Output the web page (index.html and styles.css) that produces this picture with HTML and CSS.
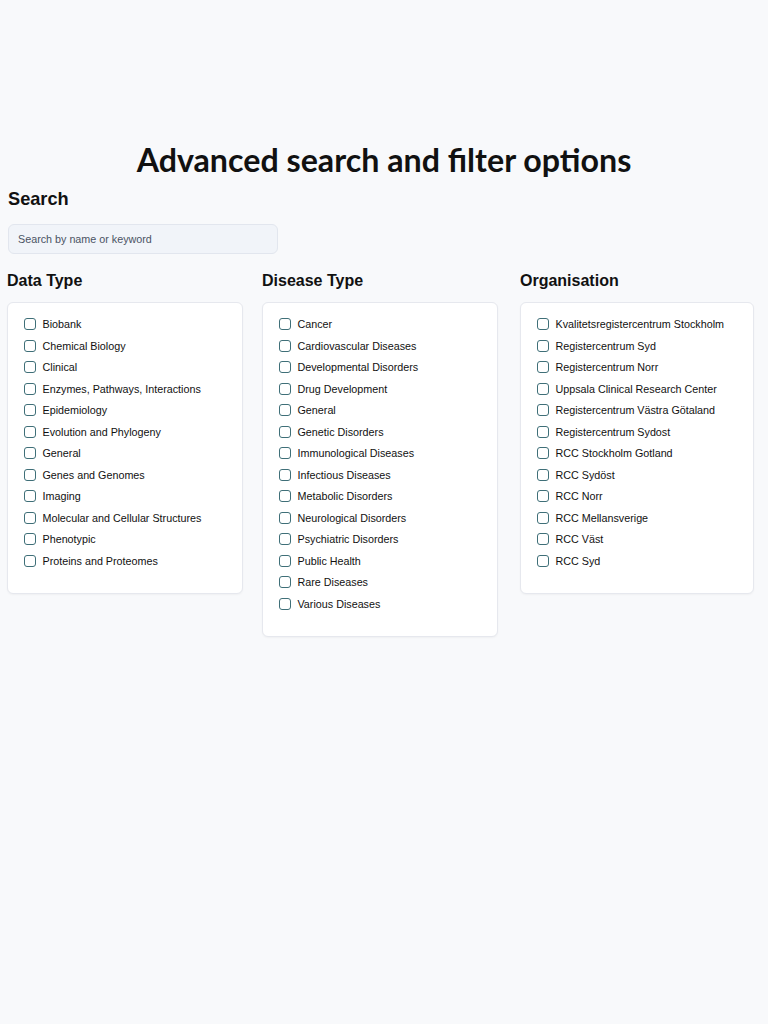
FILE: index.html
```html
<!DOCTYPE html>
<html lang="en">
<head>
<meta charset="utf-8">
<title>Advanced search and filter options</title>
<link rel="stylesheet" href="styles.css">
</head>
<body>
<main class="page">
  <h1 class="title">Advanced search and filter options</h1>
  <section class="search">
    <h2 class="heading search-heading">Search</h2>
    <input class="search-input" type="text" placeholder="Search by name or keyword">
  </section>
  <section class="filters">
    <div class="filter">
      <h2 class="heading">Data Type</h2>
      <ul class="card">
        <li class="item"><input type="checkbox" class="box"><span>Biobank</span></li>
        <li class="item"><input type="checkbox" class="box"><span>Chemical Biology</span></li>
        <li class="item"><input type="checkbox" class="box"><span>Clinical</span></li>
        <li class="item"><input type="checkbox" class="box"><span>Enzymes, Pathways, Interactions</span></li>
        <li class="item"><input type="checkbox" class="box"><span>Epidemiology</span></li>
        <li class="item"><input type="checkbox" class="box"><span>Evolution and Phylogeny</span></li>
        <li class="item"><input type="checkbox" class="box"><span>General</span></li>
        <li class="item"><input type="checkbox" class="box"><span>Genes and Genomes</span></li>
        <li class="item"><input type="checkbox" class="box"><span>Imaging</span></li>
        <li class="item"><input type="checkbox" class="box"><span>Molecular and Cellular Structures</span></li>
        <li class="item"><input type="checkbox" class="box"><span>Phenotypic</span></li>
        <li class="item"><input type="checkbox" class="box"><span>Proteins and Proteomes</span></li>
      </ul>
    </div>
    <div class="filter">
      <h2 class="heading">Disease Type</h2>
      <ul class="card">
        <li class="item"><input type="checkbox" class="box"><span>Cancer</span></li>
        <li class="item"><input type="checkbox" class="box"><span>Cardiovascular Diseases</span></li>
        <li class="item"><input type="checkbox" class="box"><span>Developmental Disorders</span></li>
        <li class="item"><input type="checkbox" class="box"><span>Drug Development</span></li>
        <li class="item"><input type="checkbox" class="box"><span>General</span></li>
        <li class="item"><input type="checkbox" class="box"><span>Genetic Disorders</span></li>
        <li class="item"><input type="checkbox" class="box"><span>Immunological Diseases</span></li>
        <li class="item"><input type="checkbox" class="box"><span>Infectious Diseases</span></li>
        <li class="item"><input type="checkbox" class="box"><span>Metabolic Disorders</span></li>
        <li class="item"><input type="checkbox" class="box"><span>Neurological Disorders</span></li>
        <li class="item"><input type="checkbox" class="box"><span>Psychiatric Disorders</span></li>
        <li class="item"><input type="checkbox" class="box"><span>Public Health</span></li>
        <li class="item"><input type="checkbox" class="box"><span>Rare Diseases</span></li>
        <li class="item"><input type="checkbox" class="box"><span>Various Diseases</span></li>
      </ul>
    </div>
    <div class="filter filter-last">
      <h2 class="heading">Organisation</h2>
      <ul class="card">
        <li class="item"><input type="checkbox" class="box"><span>Kvalitetsregistercentrum Stockholm</span></li>
        <li class="item"><input type="checkbox" class="box"><span>Registercentrum Syd</span></li>
        <li class="item"><input type="checkbox" class="box"><span>Registercentrum Norr</span></li>
        <li class="item"><input type="checkbox" class="box"><span>Uppsala Clinical Research Center</span></li>
        <li class="item"><input type="checkbox" class="box"><span>Registercentrum Västra Götaland</span></li>
        <li class="item"><input type="checkbox" class="box"><span>Registercentrum Sydost</span></li>
        <li class="item"><input type="checkbox" class="box"><span>RCC Stockholm Gotland</span></li>
        <li class="item"><input type="checkbox" class="box"><span>RCC Sydöst</span></li>
        <li class="item"><input type="checkbox" class="box"><span>RCC Norr</span></li>
        <li class="item"><input type="checkbox" class="box"><span>RCC Mellansverige</span></li>
        <li class="item"><input type="checkbox" class="box"><span>RCC Väst</span></li>
        <li class="item"><input type="checkbox" class="box"><span>RCC Syd</span></li>
      </ul>
    </div>
  </section>
</main>
</body>
</html>
```
FILE: styles.css
```css
* { box-sizing: border-box; }
html, body {
  margin: 0;
  padding: 0;
  background: #f8f9fb;
}
body {
  font-family: "Liberation Sans", Arial, sans-serif;
  color: #111;
}
.page {
  padding: 140px 0 40px 0;
}
.title {
  margin: 0;
  font-family: Lato, sans-serif;
  font-weight: 700;
  font-size: 32.2px;
  line-height: 40px;
  text-align: center;
  color: #111;
}
.heading {
  margin: 0;
  font-size: 16px;
  font-weight: 700;
  line-height: 24px;
  color: #111;
}
.search-heading {
  font-size: 18.2px;
}
.search {
  margin: 7px 14px 0 8px;
}
.search-input {
  display: block;
  margin-top: 13px;
  width: 270px;
  height: 30px;
  padding: 0 9px;
  border: 1px solid #e2e6ee;
  border-radius: 6px;
  background: #f1f4f9;
  font-family: "Liberation Sans", Arial, sans-serif;
  font-size: 10.75px;
  color: #333;
}
.search-input::placeholder { color: #4a5363; }
.filters {
  margin: 15px 14px 0 7px;
  display: grid;
  grid-template-columns: 236px 236px 1fr;
  column-gap: 19px;
  align-items: start;
}
.filter-last {
  width: 234px;
  justify-self: end;
}
.filter .heading { margin-bottom: 9px; }
.card {
  list-style: none;
  margin: 0;
  padding: 10.5px 16px 21.5px 15.5px;
  background: #fff;
  border: 1px solid #e6e8ee;
  border-radius: 6px;
  box-shadow: 0 1px 2px rgba(0,0,0,0.04);
}
.item {
  display: flex;
  align-items: center;
  height: 21.5px;
  font-size: 10.75px;
  color: #111;
}
.box {
  appearance: none;
  -webkit-appearance: none;
  margin: 0 7px 0 0;
  width: 12px;
  height: 12px;
  border: 1.3px solid #3f6f78;
  border-radius: 3px;
  background: #fff;
  flex: none;
}
```
